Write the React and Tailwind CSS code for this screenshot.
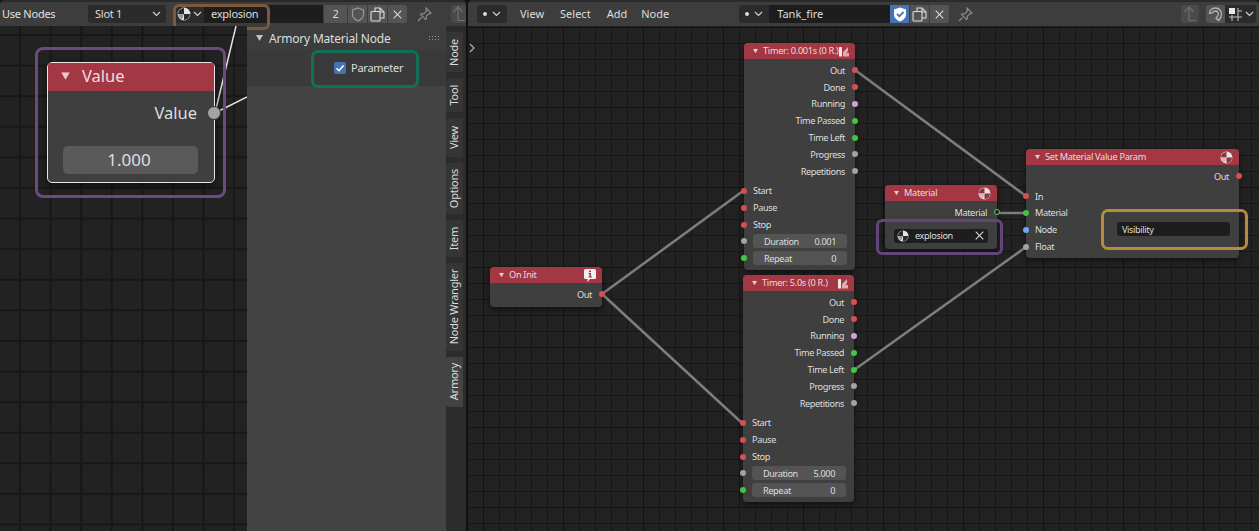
const font = "font-['Noto_Sans',sans-serif]";
const gridRight =
  "bg-[#222222] bg-[linear-gradient(90deg,#121212_1.5px,transparent_1.5px),linear-gradient(#131313_1.5px,transparent_1.5px),linear-gradient(90deg,#171717_1px,transparent_1px),linear-gradient(#171717_1px,transparent_1px)] bg-[size:80px_100%,100%_80px,16px_100%,100%_16px] bg-[position:15px_0,0_1px,15px_0,0_1px]";
const gridLeft =
  "bg-[#222222] bg-[linear-gradient(90deg,#171717_1.5px,transparent_1.5px),linear-gradient(#171717_1.5px,transparent_1.5px)] bg-[size:30.6px_100%,100%_30.6px] bg-[position:19px_0,0_8px]";

function Chevron({ className = "" }) {
  return (
    <svg width="9" height="6" viewBox="0 0 9 6" className={className}>
      <path d="M1 1l3.5 3.5L8 1" fill="none" stroke="#d0d0d0" strokeWidth="1.2" />
    </svg>
  );
}

function MaterialIcon({ size = 14, dark = "#2a2a2a", soft = "#9a9a9a" }) {
  return (
    <svg width={size} height={size} viewBox="0 0 14 14" className="shrink-0">
      <circle cx="7" cy="7" r="6.4" fill="#e4e4e4" />
      <path d="M7 7V1A6 6 0 0 0 1 7z" fill={dark} />
      <path d="M7 7h6a6 6 0 0 1-6 6z" fill={dark} />
      <path d="M7 7H1.4A6 6 0 0 0 5 12.5z" fill={soft} />
    </svg>
  );
}

function TimeIcon() {
  return (
    <svg width="10" height="11" viewBox="0 0 10 11" className="shrink-0">
      <rect x="0" y="1" width="3" height="9.500" rx="0.6" fill="#f2e6e8" />
      <path d="M4 10.500V6l5-5v4L7.500 7H10v3.500z" fill="#e2aab2" />
    </svg>
  );
}

function InfoIcon() {
  return (
    <svg width="12" height="13" viewBox="0 0 12 13" className="shrink-0">
      <path d="M1.5 0h9A1.5 1.5 0 0 1 12 1.5v7A1.5 1.5 0 0 1 10.5 10H6l-2.5 3v-3h-2A1.5 1.5 0 0 1 0 8.5v-7A1.5 1.5 0 0 1 1.5 0z" fill="#f0f0f0" />
      <rect x="5" y="1.5" width="2" height="1.6" fill="#a33744" />
      <path d="M4.5 4H7v3.5h1v1H4.5v-1h1V5h-1z" fill="#a33744" />
    </svg>
  );
}

function ShieldIcon({ checked }) {
  return (
    <svg width="14" height="15" viewBox="0 0 14 15">
      {checked ? (
        <>
          <path d="M7 .5l6 2v5c0 3.500-3 5.800-6 7-3-1.200-6-3.500-6-7v-5z" fill="#fff" />
          <path d="M4 7l2.300 2.300L10.500 5" fill="none" stroke="#4772b3" strokeWidth="1.800" />
        </>
      ) : (
        <path d="M7 1l5.500 2v4.500c0 3-2.500 5-5.500 6.500-3-1.500-5.500-3.500-5.500-6.500V3z" fill="none" stroke="#9a9a9a" strokeWidth="1.200" />
      )}
    </svg>
  );
}

function CopyIcon() {
  return (
    <svg width="15" height="15" viewBox="0 0 15 15" fill="none" stroke="#dcdcdc" strokeWidth="1.100">
      <path d="M5 4V1h5l4 4v6h-4" />
      <path d="M10 1v4h4" />
      <rect x="1" y="4.500" width="9" height="9.500" rx="1" />
    </svg>
  );
}

function CloseIcon() {
  return (
    <svg width="9" height="9" viewBox="0 0 9 9" className="shrink-0">
      <path d="M.7.700l7.600 7.600M8.300.700L.7 8.300" stroke="#d8d8d8" strokeWidth="1.100" />
    </svg>
  );
}

function PinIcon() {
  return (
    <svg width="15" height="15" viewBox="0 0 15 15" fill="none" stroke="#8f8f8f" strokeWidth="1.100">
      <path d="M9 1l5 5-1 .800-1-.300-2.800 2.800.3 2.200-1 1-5-5 1-1 2.200.3L9.500 4 9 2.500z" />
      <path d="M4.500 10.500L1 14" />
    </svg>
  );
}

function UpIcon() {
  return (
    <svg width="14" height="16" viewBox="0 0 14 16" fill="none" stroke="#6f6f6f" strokeWidth="1.200">
      <path d="M1.500 6L6 1l4.500 5M6 1v12.500a1 1 0 0 0 1 1h6" />
    </svg>
  );
}

function SnapIcon() {
  return (
    <svg width="15" height="15" viewBox="0 0 15 15">
      <rect x="1" y="1" width="6" height="6" fill="#e8e8e8" />
      <path d="M10 1v13M1 10h13M4 8v6M10 4h4" stroke="#bdbdbd" strokeWidth="1.100" />
    </svg>
  );
}

function MagnetIcon() {
  return (
    <svg width="15" height="15" viewBox="0 0 15 15" fill="none" stroke="#b5b5b5" strokeWidth="1.300">
      <path d="M1.500 6.500C1.500 3 4 1 7.500 1c3.500 0 6 2.700 6 6 0 2.800-1.500 5-3 6.500L8 11.200c1-1 2.300-2.500 2.300-4.200 0-1.700-1.300-3-2.900-3-1.400 0-2.400.8-2.700 1.800z" />
    </svg>
  );
}

function Collapse({ className = "" }) {
  return (
    <svg width="7" height="6" viewBox="0 0 7 6" className={`shrink-0 ${className}`}>
      <path d="M0 0h7L3.500 6z" fill="#e8c9cd" />
    </svg>
  );
}

function Socket({ color, side, hollow }) {
  const place = side === "right" ? "right-[-3px]" : "left-[-3px]";
  return (
    <span
      className={`absolute top-1/2 -translate-y-1/2 size-[6px] rounded-full ${place} ${hollow ? "border-[1.5px] border-[#5fd05f] bg-[#1d1d1d]" : ""}`}
      style={hollow ? undefined : { backgroundColor: color }}
    />
  );
}

const RED = "#d84f4f";
const GREEN = "#43c443";
const GRAY = "#a3a3a3";
const PINK = "#c9a5da";
const BLUE = "#6aa8f0";
// header icons: the dark parts of the sphere are tinted by the red bar
const HEAD_DARK = "#8d3540";
const HEAD_SOFT = "#d8b4b8";

function Out({ label, color, hollow }) {
  return (
    <div className="relative h-[16.8px] flex items-center justify-end pr-[10px]">
      <span>{label}</span>
      <Socket color={color} side="right" hollow={hollow} />
    </div>
  );
}

function In({ label, color }) {
  return (
    <div className="relative h-[16.8px] flex items-center pl-[9px]">
      <span>{label}</span>
      <Socket color={color} side="left" />
    </div>
  );
}

function Num({ label, value, color }) {
  return (
    <div className="relative h-[16.8px] flex items-center pl-[9px] pr-[8px]">
      <Socket color={color} side="left" />
      <div className="flex-1 h-[14px] rounded-[3px] bg-[#545454] flex items-center justify-between px-[11px]">
        <span>{label}</span>
        <span>{value}</span>
      </div>
    </div>
  );
}

function Node({ title, icon, className, children }) {
  return (
    <div className={`absolute rounded-[4px] bg-[#3f3f3f] shadow-[0_2px_6px_rgba(0,0,0,0.55)] text-[9.2px] tracking-[-0.4px] leading-none text-[#dedede] ${className}`}>
      <div className="h-[16px] rounded-t-[4px] bg-[#a33744] flex items-center pl-[8px] pr-[6px] text-[#eed9db] tracking-[-0.3px]">
        <Collapse className="scale-75 mr-[4px]" />
        <span className="flex-1 min-w-0 whitespace-nowrap pb-[1px]">{title}</span>
        {icon}
      </div>
      {children}
    </div>
  );
}

function TimerNode({ title, duration, className }) {
  return (
    <Node title={title} icon={<TimeIcon />} className={`w-[111px] h-[227px] ${className}`}>
      <div className="pt-[3px]">
        <Out label="Out" color={RED} />
        <Out label="Done" color={RED} />
        <Out label="Running" color={PINK} />
        <Out label="Time Passed" color={GREEN} />
        <Out label="Time Left" color={GREEN} />
        <Out label="Progress" color={GRAY} />
        <Out label="Repetitions" color={GRAY} />
        <div className="h-[3px]" />
        <In label="Start" color={RED} />
        <In label="Pause" color={RED} />
        <In label="Stop" color={RED} />
        <Num label="Duration" value={duration} color={GRAY} />
        <Num label="Repeat" value="0" color={GREEN} />
      </div>
    </Node>
  );
}

function Wires() {
  return (
    <svg width="791" height="505" className="absolute left-0 top-0" fill="none" stroke="#7e7e7e" strokeWidth="2.500">
      <path d="M387 44L558 170" />
      <path d="M134 268L275 165" />
      <path d="M134 268L274 397" />
      <path d="M529 187H558" />
      <path d="M386 344L558 221" />
    </svg>
  );
}

function HeaderButton({ children, className = "" }) {
  return (
    <div className={`h-[18px] flex items-center justify-center bg-[#545454] ${className}`}>
      {children}
    </div>
  );
}

function LeftHeader() {
  return (
    <div className="relative h-[26px] shrink-0 border-t-2 border-[#2a2a2a] rounded-t-[4px] bg-[#3d3d3d] flex items-center text-[11px] tracking-[-0.25px] text-[#dedede]">
      <span className="ml-[2px] w-[86px] text-[#e0e0e0]">Use Nodes</span>
      <div className="w-[78px] h-[18px] rounded-[3px] bg-[#2b2b2b] flex items-center justify-between pl-[7px] pr-[5px]">
        <span>Slot 1</span>
        <Chevron />
      </div>
      <div className="ml-[9px] w-[29px] h-[18px] rounded-l-[3px] bg-[#2b2b2b] flex items-center gap-[2px] pl-[2px]">
        <MaterialIcon />
        <Chevron />
      </div>
      <div className="w-[119px] h-[18px] bg-[#1d1d1d] pl-[7px] flex items-center">explosion</div>
      <HeaderButton className="ml-[1px] w-[23px]">2</HeaderButton>
      <HeaderButton className="ml-[1px] w-[19px]"><ShieldIcon /></HeaderButton>
      <HeaderButton className="ml-[1px] w-[19px]"><CopyIcon /></HeaderButton>
      <HeaderButton className="ml-[1px] w-[19px] rounded-r-[3px]"><CloseIcon /></HeaderButton>
      <div className="ml-[10px]"><PinIcon /></div>
      <div className="ml-[19px] w-[15px] h-[18px] rounded-[3px] bg-[#4a4a4a] flex items-center justify-center"><UpIcon /></div>
      <div className="absolute left-[173px] top-[2px] w-[97px] h-[26px] rounded-[6px] border-[3px] border-[#7c5a40]" />
    </div>
  );
}

function RightHeader() {
  return (
    <div className="h-[26px] shrink-0 border-t-2 border-[#2a2a2a] rounded-t-[4px] bg-[#3d3d3d] flex items-center text-[11px] text-[#dedede]">
      <div className="ml-[9px] w-[30px] h-[18px] rounded-[3px] bg-[#2b2b2b] flex items-center justify-center gap-[5px]">
        <span className="size-[4px] rounded-full bg-[#dcdcdc]" />
        <Chevron />
      </div>
      <div className="ml-[13px] flex gap-[15px]">
        <span>View</span>
        <span className="ml-[1px]">Select</span>
        <span className="ml-[1px]">Add</span>
        <span className="ml-[-1px]">Node</span>
      </div>
      <div className="ml-[70px] w-[30px] h-[18px] rounded-l-[3px] bg-[#2b2b2b] flex items-center justify-center gap-[5px]">
        <span className="size-[4px] rounded-full bg-[#dcdcdc]" />
        <Chevron />
      </div>
      <div className="w-[121px] h-[18px] bg-[#1d1d1d] pl-[8px] flex items-center">Tank_fire</div>
      <HeaderButton className="w-[19px] !bg-[#4772b3]"><ShieldIcon checked /></HeaderButton>
      <HeaderButton className="ml-[1px] w-[19px]"><CopyIcon /></HeaderButton>
      <HeaderButton className="ml-[1px] w-[19px] rounded-r-[3px]"><CloseIcon /></HeaderButton>
      <div className="ml-[9px]"><PinIcon /></div>
      <div className="ml-auto w-[18px] h-[18px] rounded-[3px] bg-[#4a4a4a] flex items-center justify-center"><UpIcon /></div>
      <div className="ml-[7px] w-[19px] h-[18px] rounded-l-[3px] bg-[#545454] flex items-center justify-center"><MagnetIcon /></div>
      <div className="w-[31px] mr-[3px] h-[18px] rounded-r-[3px] bg-[#2b2b2b] flex items-center justify-center gap-[2px]">
        <SnapIcon />
        <Chevron />
      </div>
    </div>
  );
}

function SideTab({ label, className = "" }) {
  return (
    <div className={`w-[17px] rounded-l-[3px] flex items-center justify-center bg-[#353535] ${className}`}>
      <span className="[writing-mode:vertical-rl] rotate-180 whitespace-nowrap text-[11px] tracking-[-0.25px] text-[#dcdcdc]">{label}</span>
    </div>
  );
}

function LeftEditor() {
  return (
    <div className="w-[466px] shrink-0 flex flex-col">
      <LeftHeader />
      <div className="flex-1 flex min-h-0">
        <div className={`relative w-[247px] overflow-hidden ${gridLeft}`}>
          <svg width="247" height="200" className="absolute left-0 top-0" fill="none" stroke="#e2e2e2" strokeWidth="1.500">
            <path d="M215 87L236 0" />
            <path d="M215 87L247 71" />
          </svg>
          <div className="absolute left-[47px] top-[36px] w-[168px] h-[121px] rounded-[5px] border-[1.500px] border-[#e6e6e6] bg-[#3f3f3f] shadow-[0_3px_8px_rgba(0,0,0,0.6)] text-[#dedede]">
            <div className="h-[28px] rounded-t-[3px] bg-[#a33744] flex items-center pl-[14px] pb-[2px] text-[16.500px] text-[#eedcde]">
              <Collapse className="scale-[1.250] mr-[13px]" />
              Value
            </div>
            <div className="relative h-[44px] flex items-center justify-end pr-[17px] text-[16.500px]">
              Value
              <span className="absolute right-[-7px] top-[15px] size-[14px] rounded-full bg-[#a3a3a3] border border-[#333]" />
            </div>
            <div className="ml-[15px] mr-[16px] mt-[11px] pb-[1px] pr-[3px] h-[28px] rounded-[5px] bg-[#5a5a5a] flex items-center justify-center text-[17px]">1.000</div>
          </div>
          <div className="absolute left-[35px] top-[21px] w-[191px] h-[151px] rounded-[8px] border-[3px] border-[#6b4a80]" />
        </div>
        <div className="w-[199px] bg-[#434343] flex flex-col text-[11px] tracking-[-0.25px] text-[#dedede]">
          <div className="h-[24px] bg-[#3d3d3d] flex items-center pl-[9px]">
            <svg width="7" height="6" viewBox="0 0 7 6" className="mr-[6px]">
              <path d="M0 0h7L3.500 6z" fill="#c4c4c4" />
            </svg>
            <span className="text-[12px] tracking-[-0.2px] pt-[1px] flex-1">Armory Material Node</span>
            <span className="mr-[7px] grid grid-cols-4 gap-[1.500px]">
              {Array.from({ length: 8 }).map((_, i) => (
                <span key={i} className="size-[1.500px] bg-[#9a9a9a]" />
              ))}
            </span>
          </div>
          <div className="relative h-[36px] bg-[#3a3a3a] flex items-center pl-[87px]">
            <span className="size-[12px] rounded-[2px] bg-[#4772b3] flex items-center justify-center mr-[5px]">
              <svg width="10" height="10" viewBox="0 0 10 10">
                <path d="M1.500 5.200l2.500 2.500L8.500 2.500" fill="none" stroke="#fff" strokeWidth="1.600" />
              </svg>
            </span>
            Parameter
            <div className="absolute left-[64px] top-0 w-[108px] h-[38px] rounded-[7px] border-[3px] border-[#137058]" />
          </div>
        </div>
        <div className="w-[20px] bg-[#2c2c2c] flex flex-col gap-[6px] pt-[6px]">
          <SideTab label="Node" className="h-[40px]" />
          <SideTab label="Tool" className="h-[34px]" />
          <SideTab label="View" className="h-[39px]" />
          <SideTab label="Options" className="h-[51px]" />
          <SideTab label="Item" className="h-[37px]" />
          <SideTab label="Node Wrangler" className="h-[88px]" />
          <SideTab label="Armory" className="h-[50px] !bg-[#434343]" />
        </div>
      </div>
    </div>
  );
}

function RightEditor() {
  return (
    <div className="flex-1 flex flex-col ml-[2px]">
      <RightHeader />
      <div className={`relative flex-1 overflow-hidden ${font} ${gridRight}`}>
        <Wires />
        <svg width="6" height="10" viewBox="0 0 6 10" className="absolute left-[1px] top-[17px]">
          <path d="M1 1l4 4-4 4" fill="none" stroke="#b0b0b0" strokeWidth="1.200" />
        </svg>

        <TimerNode title="Timer: 0.001s (0 R.)" duration="0.001" className="left-[276px] top-[17px]" />
        <TimerNode title="Timer: 5.0s (0 R.)" duration="5.000" className="left-[275px] top-[249px]" />

        <Node title="On Init" icon={<InfoIcon />} className="left-[22px] top-[241px] w-[112px] h-[40px]">
          <div className="pt-[3px]"><Out label="Out" color={RED} /></div>
        </Node>

        <Node title="Material" icon={<MaterialIcon size={13} dark={HEAD_DARK} soft={HEAD_SOFT} />} className="left-[417px] top-[159px] w-[112px] h-[64px]">
          <div className="pt-[3px]">
            <Out label="Material" color={GREEN} hollow />
            <div className="h-[14px] mx-[9px] mt-[8px] flex items-center">
              <div className="flex-1 h-[14px] rounded-[3px] bg-[#1d1d1d] flex items-center pl-[3px] pr-[4px] gap-[6px]">
                <MaterialIcon size={12} />
                <span className="flex-1">explosion</span>
                <CloseIcon />
              </div>
            </div>
          </div>
        </Node>

        <Node title="Set Material Value Param" icon={<MaterialIcon size={13} dark={HEAD_DARK} soft={HEAD_SOFT} />} className="left-[558px] top-[123px] w-[213px] h-[109px]">
          <div className="pt-[3px]">
            <Out label="Out" color={RED} />
            <div className="h-[3px]" />
            <In label="In" color={RED} />
            <In label="Material" color={GREEN} />
            <div className="relative">
              <In label="Node" color={BLUE} />
              <div className="absolute right-[9px] top-[1px] w-[113px] h-[14px] rounded-[3px] bg-[#1d1d1d] flex items-center pl-[5px]">Visibility</div>
            </div>
            <In label="Float" color={GRAY} />
          </div>
        </Node>

        <div className="absolute left-[408px] top-[193px] w-[127px] h-[36px] rounded-[6px] border-[3px] border-[#64457a]" />
        <div className="absolute left-[633px] top-[183px] w-[147px] h-[41px] rounded-[7px] border-[3px] border-[#b98a3e]" />
      </div>
    </div>
  );
}

export default function App() {
  return (
    <div className={`relative w-[1259px] h-[531px] overflow-hidden flex bg-[#111] ${font}`}>
      <LeftEditor />
      <RightEditor />
    </div>
  );
}
